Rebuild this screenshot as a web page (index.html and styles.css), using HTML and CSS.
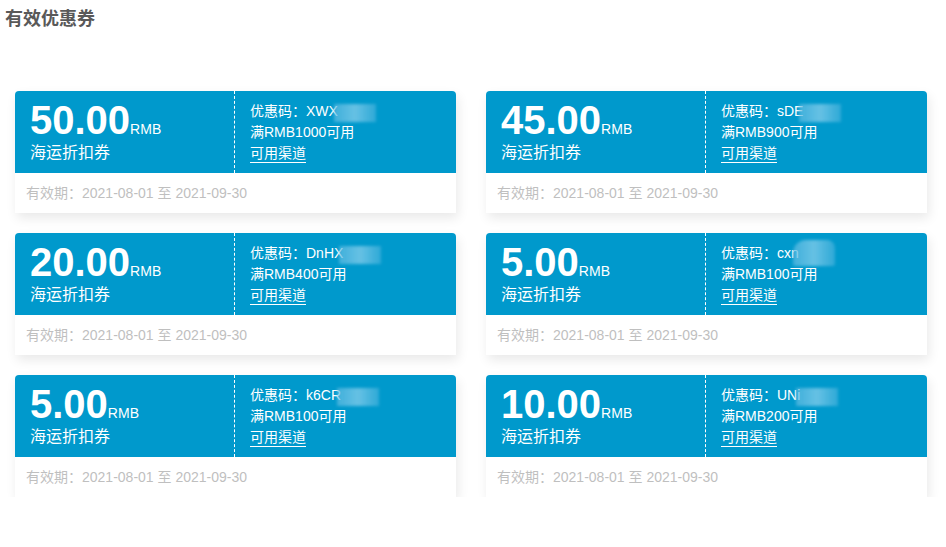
FILE: index.html
```html
<!DOCTYPE html>
<html lang="zh-CN">
<head>
<meta charset="utf-8">
<title>有效优惠券</title>
<link rel="stylesheet" href="styles.css">
</head>
<body>
<h1 class="title">有效优惠券</h1>
<div class="grid">
  <div class="card">
    <div class="card-top">
      <div class="amount-box">
        <div class="amount"><span class="num">50.00</span><span class="unit">RMB</span></div>
        <div class="type">海运折扣券</div>
      </div>
      <div class="info">
        <div class="line">优惠码：XWX<span class="mask"></span></div>
        <div class="line">满RMB1000可用</div>
        <div class="line"><span class="link">可用渠道</span></div>
      </div>
    </div>
    <div class="card-foot">有效期：2021-08-01 至 2021-09-30</div>
  </div>
  <div class="card">
    <div class="card-top">
      <div class="amount-box">
        <div class="amount"><span class="num">45.00</span><span class="unit">RMB</span></div>
        <div class="type">海运折扣券</div>
      </div>
      <div class="info">
        <div class="line">优惠码：sDE<span class="mask"></span></div>
        <div class="line">满RMB900可用</div>
        <div class="line"><span class="link">可用渠道</span></div>
      </div>
    </div>
    <div class="card-foot">有效期：2021-08-01 至 2021-09-30</div>
  </div>
  <div class="card">
    <div class="card-top">
      <div class="amount-box">
        <div class="amount"><span class="num">20.00</span><span class="unit">RMB</span></div>
        <div class="type">海运折扣券</div>
      </div>
      <div class="info">
        <div class="line">优惠码：DnHX<span class="mask"></span></div>
        <div class="line">满RMB400可用</div>
        <div class="line"><span class="link">可用渠道</span></div>
      </div>
    </div>
    <div class="card-foot">有效期：2021-08-01 至 2021-09-30</div>
  </div>
  <div class="card">
    <div class="card-top">
      <div class="amount-box">
        <div class="amount"><span class="num">5.00</span><span class="unit">RMB</span></div>
        <div class="type">海运折扣券</div>
      </div>
      <div class="info">
        <div class="line">优惠码：cxn<span class="mask mask-tall"></span></div>
        <div class="line">满RMB100可用</div>
        <div class="line"><span class="link">可用渠道</span></div>
      </div>
    </div>
    <div class="card-foot">有效期：2021-08-01 至 2021-09-30</div>
  </div>
  <div class="card">
    <div class="card-top">
      <div class="amount-box">
        <div class="amount"><span class="num">5.00</span><span class="unit">RMB</span></div>
        <div class="type">海运折扣券</div>
      </div>
      <div class="info">
        <div class="line">优惠码：k6CR<span class="mask"></span></div>
        <div class="line">满RMB100可用</div>
        <div class="line"><span class="link">可用渠道</span></div>
      </div>
    </div>
    <div class="card-foot">有效期：2021-08-01 至 2021-09-30</div>
  </div>
  <div class="card">
    <div class="card-top">
      <div class="amount-box">
        <div class="amount"><span class="num">10.00</span><span class="unit">RMB</span></div>
        <div class="type">海运折扣券</div>
      </div>
      <div class="info">
        <div class="line">优惠码：UNi<span class="mask"></span></div>
        <div class="line">满RMB200可用</div>
        <div class="line"><span class="link">可用渠道</span></div>
      </div>
    </div>
    <div class="card-foot">有效期：2021-08-01 至 2021-09-30</div>
  </div>
</div>
</body>
</html>
```

FILE: styles.css
```css
html, body {
  margin: 0;
  padding: 0;
  background: #ffffff;
}

body {
  font-family: "Liberation Sans", "Noto Sans CJK SC", sans-serif;
  color: #333;
}

.title {
  margin: 9px 0 0 5px;
  font-size: 18px;
  line-height: 20px;
  font-weight: bold;
  color: #595959;
}

.grid {
  display: grid;
  grid-template-columns: 441px 441px;
  column-gap: 30px;
  row-gap: 20px;
  margin: 62px 0 0 15px;
}

.card {
  background: #fff;
  border-radius: 4px 4px 0 0;
  box-shadow: 2px 5px 12px rgba(0, 0, 0, 0.09);
}

.card-top {
  display: flex;
  height: 82px;
  background: #0099cc;
  border-radius: 4px 4px 0 0;
  color: #fff;
}

.amount-box {
  box-sizing: border-box;
  width: 220px;
  padding: 15px 0 0 15px;
  border-right: 1px dashed #ffffff;
}

.amount {
  line-height: 28px;
  white-space: nowrap;
}

.num {
  font-size: 40px;
  font-weight: bold;
}

.unit {
  font-size: 14px;
}

.type {
  font-size: 16px;
  line-height: 20px;
}

.info {
  padding: 10px 0 0 15px;
  font-size: 14px;
}

.line {
  line-height: 21px;
  white-space: nowrap;
}

.link {
  display: inline-block;
  line-height: 18px;
  border-bottom: 1px solid #ffffff;
}

.mask {
  display: inline-block;
  width: 42px;
  height: 18px;
  margin: -2px 0 -2px -4px;
  vertical-align: -4px;
  background: linear-gradient(90deg, rgba(90, 185, 225, 0.7), rgba(120, 200, 232, 0.85) 50%, rgba(90, 185, 225, 0.5));
  filter: blur(1.5px);
}

.mask-tall {
  height: 26px;
  margin: -8px 0 -4px -6px;
  vertical-align: -4px;
  border-radius: 13px 8px 2px 2px;
}

.card-foot {
  height: 40px;
  line-height: 40px;
  padding-left: 11px;
  font-size: 14px;
  color: #bfbfbf;
}
```
